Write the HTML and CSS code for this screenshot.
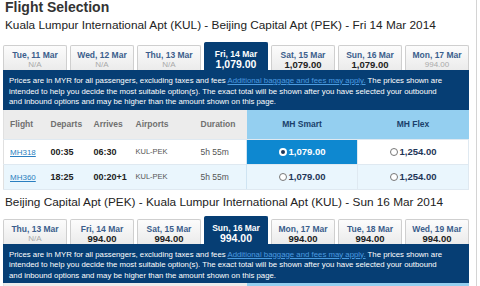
FILE: index.html
```html
<!DOCTYPE html>
<html lang="en">
<head>
    <meta charset="UTF-8">
    <meta name="viewport" content="width=device-width, initial-scale=1.0">
    <title>Flight Selection</title>
    <link rel="stylesheet" href="styles.css">
</head>
<body>
    <div class="layout">
        <div class="main">
            <h1 class="title">Flight Selection</h1>

            <!-- outbound -->
            <h2 class="route">Kuala Lumpur International Apt (KUL) - Beijing Capital Apt (PEK) - Fri 14 Mar 2014</h2>
            <div class="tabs">
                <div class="tab"><div class="tab-date">Tue, 11 Mar</div><div class="tab-price na">N/A</div></div>
                <div class="tab"><div class="tab-date">Wed, 12 Mar</div><div class="tab-price na">N/A</div></div>
                <div class="tab"><div class="tab-date">Thu, 13 Mar</div><div class="tab-price na">N/A</div></div>
                <div class="tab active"><div class="tab-date">Fri, 14 Mar</div><div class="tab-price">1,079.00</div></div>
                <div class="tab"><div class="tab-date">Sat, 15 Mar</div><div class="tab-price">1,079.00</div></div>
                <div class="tab"><div class="tab-date">Sun, 16 Mar</div><div class="tab-price">1,079.00</div></div>
                <div class="tab"><div class="tab-date">Mon, 17 Mar</div><div class="tab-price na">994.00</div></div>
            </div>
            <div class="notice">
                Prices are in MYR for all passengers, excluding taxes and fees <a href="#">Additional baggage and fees may apply.</a> The prices shown are<br>
                intended to help you decide the most suitable option(s). The exact total will be shown after you have selected your outbound<br>
                and inbound options and may be higher than the amount shown on this page.
            </div>
            <table class="flights">
                <colgroup>
                    <col style="width:42px"><col style="width:43px"><col style="width:42px"><col style="width:65px"><col style="width:51px"><col style="width:111px"><col>
                </colgroup>
                <tr>
                    <th>Flight</th><th>Departs</th><th>Arrives</th><th>Airports</th><th>Duration</th>
                    <th class="fare">MH Smart</th><th class="fare">MH Flex</th>
                </tr>
                <tr>
                    <td><a href="#">MH318</a></td><td class="time">00:35</td><td class="time">06:30</td><td class="port">KUL-PEK</td><td>5h 55m</td>
                    <td class="fare picked"><span class="radio on"></span>1,079.00</td>
                    <td class="fare"><span class="radio"></span>1,254.00</td>
                </tr>
                <tr class="alt">
                    <td><a href="#">MH360</a></td><td class="time">18:25</td><td class="time">00:20+1</td><td class="port">KUL-PEK</td><td>5h 55m</td>
                    <td class="fare"><span class="radio"></span>1,079.00</td>
                    <td class="fare"><span class="radio"></span>1,254.00</td>
                </tr>
            </table>

            <!-- return -->
            <h2 class="route">Beijing Capital Apt (PEK) - Kuala Lumpur International Apt (KUL) - Sun 16 Mar 2014</h2>
            <div class="tabs">
                <div class="tab"><div class="tab-date">Thu, 13 Mar</div><div class="tab-price na">N/A</div></div>
                <div class="tab"><div class="tab-date">Fri, 14 Mar</div><div class="tab-price">994.00</div></div>
                <div class="tab"><div class="tab-date">Sat, 15 Mar</div><div class="tab-price">994.00</div></div>
                <div class="tab active"><div class="tab-date">Sun, 16 Mar</div><div class="tab-price">994.00</div></div>
                <div class="tab"><div class="tab-date">Mon, 17 Mar</div><div class="tab-price">994.00</div></div>
                <div class="tab"><div class="tab-date">Tue, 18 Mar</div><div class="tab-price">994.00</div></div>
                <div class="tab"><div class="tab-date">Wed, 19 Mar</div><div class="tab-price">994.00</div></div>
            </div>
            <div class="notice">
                Prices are in MYR for all passengers, excluding taxes and fees <a href="#">Additional baggage and fees may apply.</a> The prices shown are<br>
                intended to help you decide the most suitable option(s). The exact total will be shown after you have selected your outbound<br>
                and inbound options and may be higher than the amount shown on this page.
            </div>
            <table class="flights">
                <colgroup>
                    <col style="width:42px"><col style="width:43px"><col style="width:42px"><col style="width:65px"><col style="width:51px"><col style="width:111px"><col>
                </colgroup>
                <tr>
                    <th>Flight</th><th>Departs</th><th>Arrives</th><th>Airports</th><th>Duration</th>
                    <th class="fare">MH Smart</th><th class="fare">MH Flex</th>
                </tr>
            </table>
        </div>
        <div class="side"></div>
    </div>
</body>
</html>
```

FILE: styles.css
```css
body {
    margin: 0;
    font-family: 'Liberation Sans', Arial, sans-serif;
    color: #222;
    background: #fff;
    overflow: hidden;
}

.layout {
    display: flex;
}

.main {
    width: 466px;
    margin-left: 3px;
}

.side {
    flex: 1;
    margin-left: 7px;
    border-left: 1px solid #d4d4d4;
    min-height: 286px;
}

/* headings */
.title {
    margin: 0 0 0 2px;
    font-size: 14px;
    line-height: 14px;
    font-weight: bold;
    color: #333;
}

.route {
    margin: 4px 0 10px 2px;
    font-size: 11.8px;
    line-height: 14px;
    font-weight: normal;
    color: #222;
}

.flights + .route {
    margin-top: 5px;
    margin-bottom: 7px;
}

/* date tabs */
.tabs {
    display: flex;
    align-items: flex-end;
    gap: 3px;
}

.tab {
    width: 64px;
    height: 25px;
    box-sizing: border-box;
    padding-top: 4px;
    border: 1px solid #cfcfcf;
    border-bottom: none;
    border-radius: 2px 2px 0 0;
    background: linear-gradient(#fcfcfc, #ebebeb);
    text-align: center;
}

.tab-date {
    font-size: 8.5px;
    line-height: 10px;
    font-weight: bold;
    color: #3b5e8c;
}

.tab-price {
    font-size: 9.5px;
    line-height: 10px;
    font-weight: bold;
    color: #222;
}

.tab-price.na {
    font-size: 8px;
    font-weight: normal;
    color: #aaa;
}

.tab.active {
    height: 28px;
    padding-top: 6px;
    border-color: #063e74;
    background: #063e74;
}

.tab.active .tab-date {
    color: #fff;
}

.tab.active .tab-price {
    font-size: 10.5px;
    line-height: 11px;
    color: #fff;
}

/* info box */
.notice {
    padding: 6px 6px 2px;
    background: #063e74;
    color: #fff;
    font-size: 7.8px;
    line-height: 10.5px;
    white-space: nowrap;
}

.notice a {
    color: #4a9be0;
}

/* flights table */
.flights {
    width: 466px;
    border-collapse: collapse;
    table-layout: fixed;
    border-left: 1px solid #e0e0e0;
}

.flights th {
    height: 29px;
    padding: 0 0 0 5px;
    background: #ececec;
    color: #707070;
    font-size: 8.5px;
    font-weight: bold;
    text-align: left;
}

.flights th:first-child,
.flights td:first-child {
    padding-left: 6px;
}

.flights th.fare {
    padding: 0;
    background: #94cff0;
    color: #1a3f6b;
    text-align: center;
}

.flights td {
    height: 24px;
    padding: 0 0 0 5px;
    border-top: 1px solid #dfe9f1;
    font-size: 8.5px;
    color: #555;
    white-space: nowrap;
}

.flights tr.alt td {
    background: #eaf6fd;
    border-bottom: 1px solid #dfe9f1;
}

.flights a {
    font-size: 8px;
    color: #2a7fc0;
}

.flights td.time {
    font-size: 9px;
    font-weight: bold;
    color: #222;
}

.flights td.port {
    font-size: 7.5px;
}

.flights td.fare {
    padding: 0;
    border-left: 1px solid #cfe4f2;
    border-right: 1px solid #dfe9f1;
    text-align: center;
    font-size: 9.5px;
    font-weight: bold;
    color: #1d3557;
}

.flights td.fare.picked {
    background: #0e88d0;
    color: #fff;
}

/* radio buttons */
.radio {
    display: inline-block;
    width: 8px;
    height: 8px;
    box-sizing: border-box;
    margin-right: 2px;
    border: 1px solid #777;
    border-radius: 50%;
    background: #fff;
    vertical-align: -1px;
}

.radio.on {
    border: 2px solid #fff;
    background: #1d3557;
}
```
